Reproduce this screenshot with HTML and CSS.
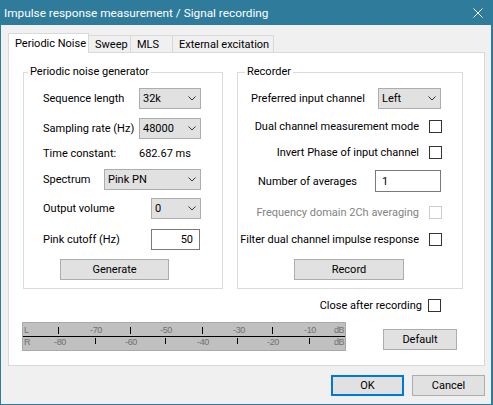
FILE: index.html
```html
<!DOCTYPE html>
<html>
<head>
<meta charset="utf-8">
<link rel="stylesheet" href="styles.css">
</head>
<body>
<div class="window">
  <div class="titlebar">
    <span class="title">Impulse response measurement / Signal recording</span>
    <svg class="close" width="10" height="10" viewBox="0 0 10 10"><path d="M0.5 0.5L9.5 9.5M9.5 0.5L0.5 9.5" stroke="#ffffff" stroke-width="1" fill="none"/></svg>
  </div>
  <div class="tabs">
    <div class="tab active t-pn">Periodic Noise</div>
    <div class="tab t-sw">Sweep</div>
    <div class="tab t-mls">MLS</div>
    <div class="tab t-ext">External excitation</div>
  </div>
  <div class="panel">
    <div class="groups">
      <div class="group gen">
        <span class="legend">Periodic noise generator</span>
        <div class="row g1"><span>Sequence length</span><div class="combo c-seq"><span>32k</span><svg width="8" height="5" viewBox="0 0 8 5"><polyline points="0.5,0.5 4,4 7.5,0.5" fill="none" stroke="#333" stroke-width="1"/></svg></div></div>
        <div class="row g2"><span>Sampling rate (Hz)</span><div class="combo c-seq"><span>48000</span><svg width="8" height="5" viewBox="0 0 8 5"><polyline points="0.5,0.5 4,4 7.5,0.5" fill="none" stroke="#333" stroke-width="1"/></svg></div></div>
        <div class="row g3"><span>Time constant:</span><span class="tc">682.67 ms</span></div>
        <div class="row g4"><span>Spectrum</span><div class="combo c-spec"><span>Pink PN</span><svg width="8" height="5" viewBox="0 0 8 5"><polyline points="0.5,0.5 4,4 7.5,0.5" fill="none" stroke="#333" stroke-width="1"/></svg></div></div>
        <div class="row g5"><span>Output volume</span><div class="combo c-vol"><span>0</span><svg width="8" height="5" viewBox="0 0 8 5"><polyline points="0.5,0.5 4,4 7.5,0.5" fill="none" stroke="#333" stroke-width="1"/></svg></div></div>
        <div class="row g6"><span>Pink cutoff (Hz)</span><div class="input i-pink">50</div></div>
        <div class="btn b-gen">Generate</div>
      </div>
      <div class="group rec">
        <span class="legend">Recorder</span>
        <div class="row h1"><span>Preferred input channel</span><div class="combo c-ch"><span>Left</span><svg width="8" height="5" viewBox="0 0 8 5"><polyline points="0.5,0.5 4,4 7.5,0.5" fill="none" stroke="#333" stroke-width="1"/></svg></div></div>
        <div class="row chk h2"><span>Dual channel measurement mode</span><span class="box"></span></div>
        <div class="row chk h3"><span>Invert Phase of input channel</span><span class="box"></span></div>
        <div class="row h4"><span class="avg-label">Number of averages</span><div class="input i-avg">1</div></div>
        <div class="row chk h5 disabled"><span>Frequency domain 2Ch averaging</span><span class="box"></span></div>
        <div class="row chk h6"><span>Filter dual channel impulse response</span><span class="box"></span></div>
        <div class="btn b-rec">Record</div>
      </div>
    </div>
    <div class="close-row"><span>Close after recording</span><span class="box"></span></div>
    <div class="bottom-row">
      <div class="meter">
        <div class="mrow">
          <span class="mtxt" style="left:1px">L</span>
          <span class="tick" style="left:35px"></span>
          <span class="mnum" style="left:73px">-70</span>
          <span class="tick" style="left:107px"></span>
          <span class="mnum" style="left:143px">-50</span>
          <span class="tick" style="left:179px"></span>
          <span class="mnum" style="left:216px">-30</span>
          <span class="tick" style="left:249px"></span>
          <span class="mnum" style="left:287px">-10</span>
          <span class="mtxt" style="left:311px">dB</span>
        </div>
        <div class="mdiv"></div>
        <div class="mrow low">
          <span class="mtxt" style="left:1px">R</span>
          <span class="mnum" style="left:37px">-80</span>
          <span class="tick" style="left:72px"></span>
          <span class="mnum" style="left:108px">-60</span>
          <span class="tick" style="left:142px"></span>
          <span class="mnum" style="left:180px">-40</span>
          <span class="tick" style="left:214px"></span>
          <span class="mnum" style="left:250px">-20</span>
          <span class="tick" style="left:286px"></span>
          <span class="mtxt" style="left:311px">dB</span>
        </div>
      </div>
      <div class="btn b-def">Default</div>
    </div>
  </div>
  <div class="footer">
    <div class="btn b-ok">OK</div>
    <div class="btn b-cancel">Cancel</div>
  </div>
</div>
</body>
</html>
```

FILE: styles.css
```css
* { box-sizing: border-box; }
html, body { margin: 0; padding: 0; background: #f0f0f0; }
body {
  font-family: Roboto, "Liberation Sans", sans-serif;
  font-size: 11px;
  color: #000;
}
.window {
  width: 493px;
  height: 405px;
  background: #f0f0f0;
  border-left: 1px solid #2e7b9c;
  border-right: 2px solid #2e7b9c;
  border-bottom: 1px solid #2e7b9c;
}
.titlebar {
  height: 25px;
  background: #2e7b9c;
  color: #fff;
  display: flex;
  align-items: center;
  justify-content: space-between;
  padding-left: 3px;
  padding-right: 8px;
  font-size: 11.8px;
}
.close { display: block; }
.tabs {
  margin-top: 8px;
  margin-left: 7px;
  height: 19px;
  display: flex;
  align-items: flex-end;
}
.tab {
  height: 17px;
  border: 1px solid #d9d9d9;
  border-bottom: none;
  background: #f0f0f0;
  padding-left: 6px;
  line-height: 17px;
  margin-left: -1px;
  white-space: nowrap;
}
.tab.active {
  height: 20px;
  margin-bottom: -1px;
  margin-left: 0;
  background: #fff;
  position: relative;
  z-index: 1;
  line-height: 19px;
}
.t-pn { width: 81px; }
.t-sw { width: 43px; }
.t-mls { width: 43px; }
.t-ext { width: 102px; }
.panel {
  margin-left: 7px;
  width: 477px;
  height: 314px;
  border: 1px solid #d9d9d9;
  background: #fff;
}
.groups {
  display: flex;
  gap: 14px;
  margin-top: 19px;
  margin-left: 14px;
}
.group {
  position: relative;
  height: 217px;
  border: 1px solid #dcdcdc;
  display: flex;
  flex-direction: column;
}
.gen { width: 200px; padding: 0 21px 0 19px; }
.rec { width: 226px; padding: 0 21px 0 13px; }
.legend {
  position: absolute;
  top: -8px;
  left: 4px;
  padding: 0 2px;
  background: #fff;
  line-height: 14px;
}
.rec .legend { left: 7px; }
.row {
  height: 21px;
  display: flex;
  align-items: center;
  justify-content: space-between;
  white-space: nowrap;
}
.g1 { margin-top: 15px; }
.g2 { margin-top: 9px; }
.g3 { margin-top: 4px; }
.g4 { margin-top: 5px; }
.g5 { margin-top: 8px; }
.g6 { margin-top: 10px; }
.tc { width: 62px; }
.combo {
  height: 21px;
  background: #e1e1e1;
  border: 1px solid #adadad;
  display: flex;
  align-items: center;
  justify-content: space-between;
  padding: 0 4px 0 3px;
}
.combo svg { display: block; }
.c-seq { width: 62px; }
.c-spec { width: 97px; }
.c-vol { width: 50px; }
.c-ch { width: 63px; }
.input {
  background: #fff;
  border: 1px solid #7a7a7a;
  height: 21px;
  display: flex;
  align-items: center;
}
.i-pink { width: 49px; margin-right: 1px; justify-content: flex-end; padding-right: 6px; }
.i-avg { width: 66px; height: 22px; padding-left: 6px; }
.btn {
  height: 21px;
  background: #e1e1e1;
  border: 1px solid #adadad;
  display: flex;
  align-items: center;
  justify-content: center;
}
.b-gen { width: 109px; margin-left: 17px; margin-top: 9px; }
.b-rec { width: 110px; margin-left: 43px; margin-top: 9px; }
.h1 { margin-top: 15px; }
.h2 { margin-top: 7px; }
.h3 { margin-top: 5px; }
.h4 { margin-top: 7px; height: 22px; }
.h5 { margin-top: 10px; }
.h6 { margin-top: 6px; }
.chk { justify-content: flex-end; gap: 10px; margin-right: -1px; }
.avg-label { margin-left: 7px; }
.box {
  width: 13px;
  height: 13px;
  border: 1px solid #333;
  background: #fff;
  flex: none;
}
.disabled { color: #838383; }
.disabled .box { border-color: #cccccc; }
.close-row {
  margin-top: 10px;
  margin-left: 14px;
  width: 418px;
  height: 13px;
  display: flex;
  align-items: center;
  justify-content: flex-end;
  gap: 6px;
}
.bottom-row {
  margin-top: 10px;
  margin-left: 13px;
  display: flex;
  align-items: flex-start;
}
.meter {
  width: 324px;
  height: 29px;
  background: #c0c0c0;
  border: 1px solid #a9a9a9;
  display: flex;
  flex-direction: column;
}
.mrow { position: relative; height: 13px; }
.mdiv { height: 1px; background: #000; }
.mtxt, .mnum {
  position: absolute;
  top: 2px;
  font-family: "Liberation Sans", sans-serif;
  font-size: 9px;
  line-height: 10px;
  color: #707070;
  letter-spacing: -0.4px;
}
.low .mtxt, .low .mnum { top: 0px; }
.mnum { transform: translateX(-50%); }
.tick {
  position: absolute;
  top: 4px;
  width: 1px;
  height: 7px;
  background: #000;
}
.low .tick { top: 1px; height: 6px; }
.b-def { width: 74px; margin-left: 37px; margin-top: 7px; }
.footer {
  margin-top: 9px;
  display: flex;
  justify-content: flex-end;
  gap: 8px;
  padding-right: 6px;
}
.b-ok { width: 73px; border: 2px solid #0078d7; }
.b-cancel { width: 73px; }
```
